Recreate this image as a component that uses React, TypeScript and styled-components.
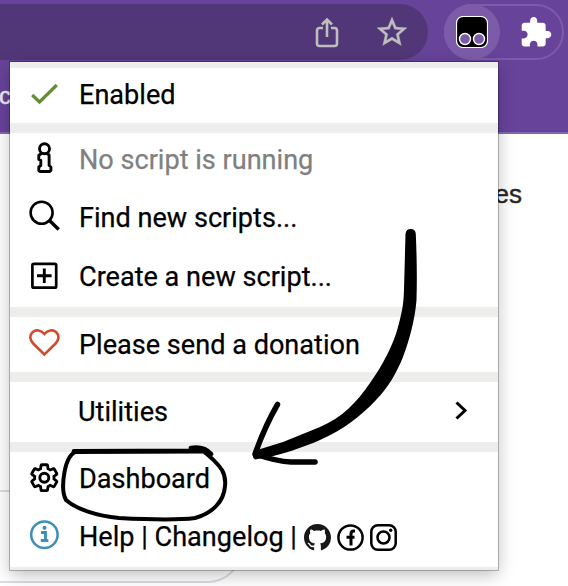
import React from "react";
import styled, { createGlobalStyle } from "styled-components";

const GlobalStyle = createGlobalStyle`
  html, body { margin: 0; background: #fff; }
  body { overflow: hidden; font-family: Roboto, "Liberation Sans", sans-serif; }
`;

const Screen = styled.main`
  position: relative;
  width: 568px;
  height: 586px;
  overflow: hidden;
  background: #fff;
`;

const Toolbar = styled.header`
  display: flex;
  align-items: center;
  box-sizing: border-box;
  height: 64px;
  background: #67439a;
`;

const AddressBar = styled.div`
  display: flex;
  align-items: center;
  justify-content: flex-end;
  gap: 37px;
  box-sizing: border-box;
  width: 428px;
  height: 56px;
  padding-right: 21px;
  border-radius: 0 28px 28px 0;
  background: #513777;
`;

const Extensions = styled.div`
  display: flex;
  align-items: center;
  box-sizing: border-box;
  width: 120px;
  height: 56px;
  margin-left: 16px;
  border: 2px solid #7c5ca8;
  border-radius: 28px;
`;

const ActiveExtension = styled.div`
  display: flex;
  align-items: center;
  justify-content: center;
  width: 56px;
  height: 56px;
  margin-left: -2px;
  border-radius: 50%;
  background: #7c5ca8;
`;

const Puzzle = styled.svg`
  margin-left: 21px;
`;

const PageBanner = styled.div`
  box-sizing: border-box;
  height: 70px;
  padding-top: 18px;
  border-bottom: 2px solid #8466b3;
  background: #67439a;
  color: #f0ecf6;
  font: 24px/28px "Liberation Sans", sans-serif;
  -webkit-text-stroke: 0.5px #f0ecf6;
  text-indent: -1px;
`;

const PageBody = styled.div`
  padding: 45px 46px 0 0;
  color: #252525;
  font: 26px/30px "Liberation Sans", sans-serif;
  -webkit-text-stroke: 0.4px #252525;
  text-align: right;
`;

const PageDivider = styled.div`
  height: 1px;
  margin: 281px 520px 0 0;
  border-top: 2px solid #dcdce4;
`;

const PageCard = styled.div`
  box-sizing: border-box;
  width: 252px;
  height: 90px;
  margin-left: -10px;
  border: 2px solid #dcdce4;
  border-top: 0;
  border-radius: 0 0 34px 0;
`;

const Menu = styled.nav`
  position: absolute;
  top: 62px;
  left: 10px;
  box-sizing: border-box;
  width: 488px;
  height: 508px;
  padding: 6px 0 3px;
  display: flex;
  flex-direction: column;
  gap: 10px;
  background: #ededec;
  box-shadow: 0 0 0 1px rgba(0, 0, 0, 0.25), 0 5px 16px rgba(0, 0, 0, 0.25);
`;

const Group = styled.section`
  background: #fff;
`;

const Row = styled.div<{ $height: number; $muted?: boolean }>`
  display: flex;
  align-items: center;
  height: ${(p) => p.$height}px;
  padding-left: 10px;
  color: ${(p) => (p.$muted ? "#808080" : "#000")};
  font-size: 27.1px;
  line-height: 32px;
  white-space: pre;
`;

const IconColumn = styled.svg`
  flex: none;
  width: 48px;
  margin-right: 11px;
  fill: none;
  stroke: #000;
  stroke-width: 2.9;
`;

const Label = styled.span<{ $raised?: boolean; $outdent?: boolean }>`
  padding-bottom: ${(p) => (p.$raised ? 2 : 0)}px;
  margin-left: ${(p) => (p.$outdent ? -1 : 0)}px;
  -webkit-text-stroke: 0.25px currentColor;
`;

const Chevron = styled.svg`
  margin-left: auto;
  margin-right: 29px;
`;

const Social = styled.div`
  display: flex;
  gap: 6px;
  margin-left: 7px;
`;

const Annotation = styled.svg`
  position: absolute;
  inset: 0;
  pointer-events: none;
`;

interface IconProps {
  height: number;
  children?: React.ReactNode;
}

const RowIcon = ({ height, children }: IconProps) => (
  <IconColumn height={height} viewBox={`0 0 48 ${height}`}>
    {children}
  </IconColumn>
);

const GITHUB =
  "M8 0C3.58 0 0 3.58 0 8c0 3.54 2.29 6.53 5.47 7.59.4.07.55-.17.55-.38 0-.19-.01-.82-.01-1.49-2.01.37-2.53-.49-2.69-.94-.09-.23-.48-.94-.82-1.13-.28-.15-.68-.52-.01-.53.63-.01 1.08.58 1.23.82.72 1.21 1.87.87 2.33.66.07-.52.28-.87.51-1.07-1.78-.2-3.64-.89-3.64-3.95 0-.87.31-1.59.82-2.15-.08-.2-.36-1.02.08-2.12 0 0 .67-.21 2.2.82.64-.18 1.32-.27 2-.27s1.36.09 2 .27c1.53-1.04 2.2-.82 2.2-.82.44 1.1.16 1.92.08 2.12.51.56.82 1.27.82 2.15 0 3.07-1.87 3.75-3.65 3.95.29.25.54.73.54 1.48 0 1.07-.01 1.93-.01 2.2 0 .21.15.46.55.38A8.01 8.01 0 0 0 16 8c0-4.42-3.58-8-8-8z";

const GEAR =
  "M19.14 12.94c.04-.3.06-.61.06-.94 0-.32-.02-.64-.07-.94l2.03-1.58c.18-.14.23-.41.12-.61l-1.92-3.32c-.12-.22-.37-.29-.59-.22l-2.39.96c-.5-.38-1.03-.7-1.62-.94l-.36-2.54c-.04-.24-.24-.41-.48-.41h-3.84c-.24 0-.43.17-.47.41l-.36 2.54c-.59.24-1.13.57-1.62.94l-2.39-.96c-.22-.08-.47 0-.59.22L2.74 8.87c-.12.21-.08.47.12.61l2.03 1.58c-.05.3-.09.63-.09.94s.02.64.07.94l-2.03 1.58c-.18.14-.23.41-.12.61l1.92 3.32c.12.22.37.29.59.22l2.39-.96c.5.38 1.03.7 1.62.94l.36 2.54c.05.24.24.41.48.41h3.84c.24 0 .44-.17.47-.41l.36-2.54c.59-.24 1.13-.56 1.62-.94l2.39.96c.22.08.47 0 .59-.22l1.92-3.32c.12-.22.07-.47-.12-.61l-2.01-1.58z";

export default function App() {
  return (
    <Screen>
      <GlobalStyle />
      <Toolbar>
        <AddressBar>
          <svg width="26" height="32" viewBox="0 0 26 32" fill="none" stroke="#bebebe" strokeWidth="2.6">
            <path d="M9 12H5.500a2.500 2.500 0 0 0-2.500 2.500v13A2.500 2.500 0 0 0 5.500 30h15a2.500 2.500 0 0 0 2.500-2.500v-13A2.500 2.500 0 0 0 20.500 12H17M13 21V4M8 8.500l5-5 5 5" />
          </svg>
          <svg width="30" height="30" viewBox="2 2 20 20" fill="#bebebe" stroke="#bebebe" strokeWidth="0.2">
            <path d="M22 9.240l-7.190-.620L12 2 9.190 8.630 2 9.240l5.460 4.730L5.820 21 12 17.270 18.180 21l-1.630-7.030L22 9.240zM12 15.400l-3.760 2.270 1-4.280-3.320-2.880 4.380-.380L12 6.100l1.710 4.040 4.380.380-3.320 2.880 1 4.280L12 15.400z" />
          </svg>
        </AddressBar>
        <Extensions>
          <ActiveExtension>
            <svg width="32" height="32" viewBox="0 0 32 32">
              <rect x="0.500" y="0.500" width="31" height="31" rx="6.500" fill="#000" stroke="#fff" strokeWidth="1.200" />
              <g fill="#7c5ca8" stroke="#fff" strokeWidth="1.400">
                <circle cx="9" cy="23" r="5.500" />
                <circle cx="23" cy="23" r="5.500" />
              </g>
            </svg>
          </ActiveExtension>
          <Puzzle width="31" height="31" viewBox="1.500 1 22 22" fill="#fff">
            <path d="M20.500 11H19V7c0-1.100-.9-2-2-2h-4V3.500C13 2.120 11.880 1 10.500 1S8 2.120 8 3.500V5H4c-1.100 0-1.990.9-1.990 2v3.800H3.500c1.490 0 2.700 1.210 2.700 2.700s-1.210 2.700-2.700 2.700H2V20c0 1.100.9 2 2 2h3.800v-1.500c0-1.490 1.210-2.700 2.700-2.700s2.700 1.210 2.700 2.700V22H17c1.100 0 2-.9 2-2v-4h1.500c1.380 0 2.500-1.120 2.500-2.500S21.880 11 20.500 11z" />
          </Puzzle>
        </Extensions>
      </Toolbar>
      <PageBanner>c</PageBanner>
      <PageBody>es</PageBody>
      <PageDivider />
      <PageCard />

      <Menu>
        <Group>
          <Row $height={55}>
            <RowIcon height={55}>
              <path d="M12.200 27L19.500 34L36.800 17" stroke="#658d36" strokeWidth="3.200" />
            </RowIcon>
            <Label $raised>Enabled</Label>
          </Row>
        </Group>
        <Group>
          <Row $height={55} $muted>
            <RowIcon height={55}>
              <circle cx="24.500" cy="15.700" r="5" />
              <path d="M21.500 20.500L18.800 22.200v4.300l2 .800v5.200l-2 1.500v3.500l1 1h10l1.100-1v-3.500l-1.800-1.500V22l-2-1.500" strokeLinejoin="round" />
            </RowIcon>
            <Label $raised>No script is running</Label>
          </Row>
          <Row $height={59}>
            <RowIcon height={59}>
              <circle cx="21.600" cy="24.700" r="11" strokeWidth="2.600" />
              <path d="M29.500 32.500L38.700 41.500" strokeWidth="3.400" />
            </RowIcon>
            <Label>Find new scripts...</Label>
          </Row>
          <Row $height={60}>
            <RowIcon height={60}>
              <rect x="12.400" y="16.900" width="23.800" height="23.800" rx="1.500" strokeWidth="2.700" />
              <path d="M17 28.800h14.600M24.300 21.500v14.600" />
            </RowIcon>
            <Label>Create a new script...</Label>
          </Row>
        </Group>
        <Group>
          <Row $height={55}>
            <RowIcon height={55}>
              <path d="M24.400 37.500L13.200 26.500C9.500 22.500 9.400 18 12.500 15.200C16 12.300 21 13 24.400 17C27.800 13 32.800 12.300 36.300 15.200C39.400 18 39.300 22.500 35.600 26.500Z" stroke="#d14b2c" strokeWidth="2.600" />
            </RowIcon>
            <Label>Please send a donation</Label>
          </Row>
        </Group>
        <Group>
          <Row $height={60}>
            <RowIcon height={60} />
            <Label $outdent>Utilities</Label>
            <Chevron width="14" height="22" viewBox="0 0 14 22" fill="none" stroke="#000" strokeWidth="3">
              <path d="M1.500 1.500l8.500 8L1.500 17.500" />
            </Chevron>
          </Row>
        </Group>
        <Group>
          <Row $height={55}>
            <RowIcon height={55}>
              <path d={GEAR} transform="translate(8.100 9.500) scale(1.350)" strokeWidth="2.100" />
              <circle cx="24.300" cy="25.700" r="4.500" />
            </RowIcon>
            <Label $raised>Dashboard</Label>
          </Row>
          <Row $height={60}>
            <RowIcon height={60}>
              <g stroke="#3d8fb8">
                <circle cx="24.400" cy="27.700" r="13.200" strokeWidth="2.500" />
                <path d="M21 25.500h4.500v8M20.800 33.500h7.500" strokeWidth="2.900" />
                <circle cx="24.500" cy="20.800" r="2.100" fill="#3d8fb8" stroke="none" />
              </g>
            </RowIcon>
            <Label>Help | Changelog |</Label>
            <Social>
              <svg width="27" height="27" viewBox="0 0 16 16">
                <path d={GITHUB} fill="#191717" />
              </svg>
              <svg width="27" height="27" viewBox="0 0 27 27" fill="none" stroke="#000">
                <circle cx="13.500" cy="13.500" r="12.100" strokeWidth="2.500" />
                <path d="M18 7h-1.500Q14 7 14 10v11.500M9.500 13.200h8" strokeWidth="3" />
              </svg>
              <svg width="27" height="27" viewBox="0 0 27 27" fill="none" stroke="#000" strokeWidth="2.500">
                <rect x="1.300" y="1.300" width="24.400" height="24.400" rx="6.500" />
                <circle cx="13.500" cy="13.500" r="6" />
                <circle cx="20.700" cy="6.300" r="1.700" fill="#000" stroke="none" />
              </svg>
            </Social>
          </Row>
        </Group>
      </Menu>

      <Annotation width="568" height="586" viewBox="0 0 568 586">
        <path d="M405.500 234Q406 229 410.700 229Q415.500 229 415.800 234C416.700 254 417.200 278 416.500 300C415 320 409 341 403 357C397 372 388 388 376 400C361 416 343 430 320 440C302 448 282 454 269 457L255 459.500Q251 457 254 451L283 442L320 427C343 417 356 403 370 383C383 365 394 343 398 327C403 309 403.500 302 404 290Z" />
        <g fill="none" stroke="#000" strokeLinecap="round" strokeLinejoin="round">
          <path d="M277.500 404.500Q265 426 255 454Q277 461.500 291 462L315 462" strokeWidth="5.500" />
          <path d="M74 451.500L202 451M191 448Q204 446 211 454" strokeWidth="4.800" />
          <path d="M203 451Q216 461 222 470Q226 477 225 486C224 501 213 513 195 518C176 520.500 147 519.500 119 518C97 516 76 509 66 500Q61 491 64.500 472Q68 453 78 451" strokeWidth="4" />
        </g>
      </Annotation>
    </Screen>
  );
}
